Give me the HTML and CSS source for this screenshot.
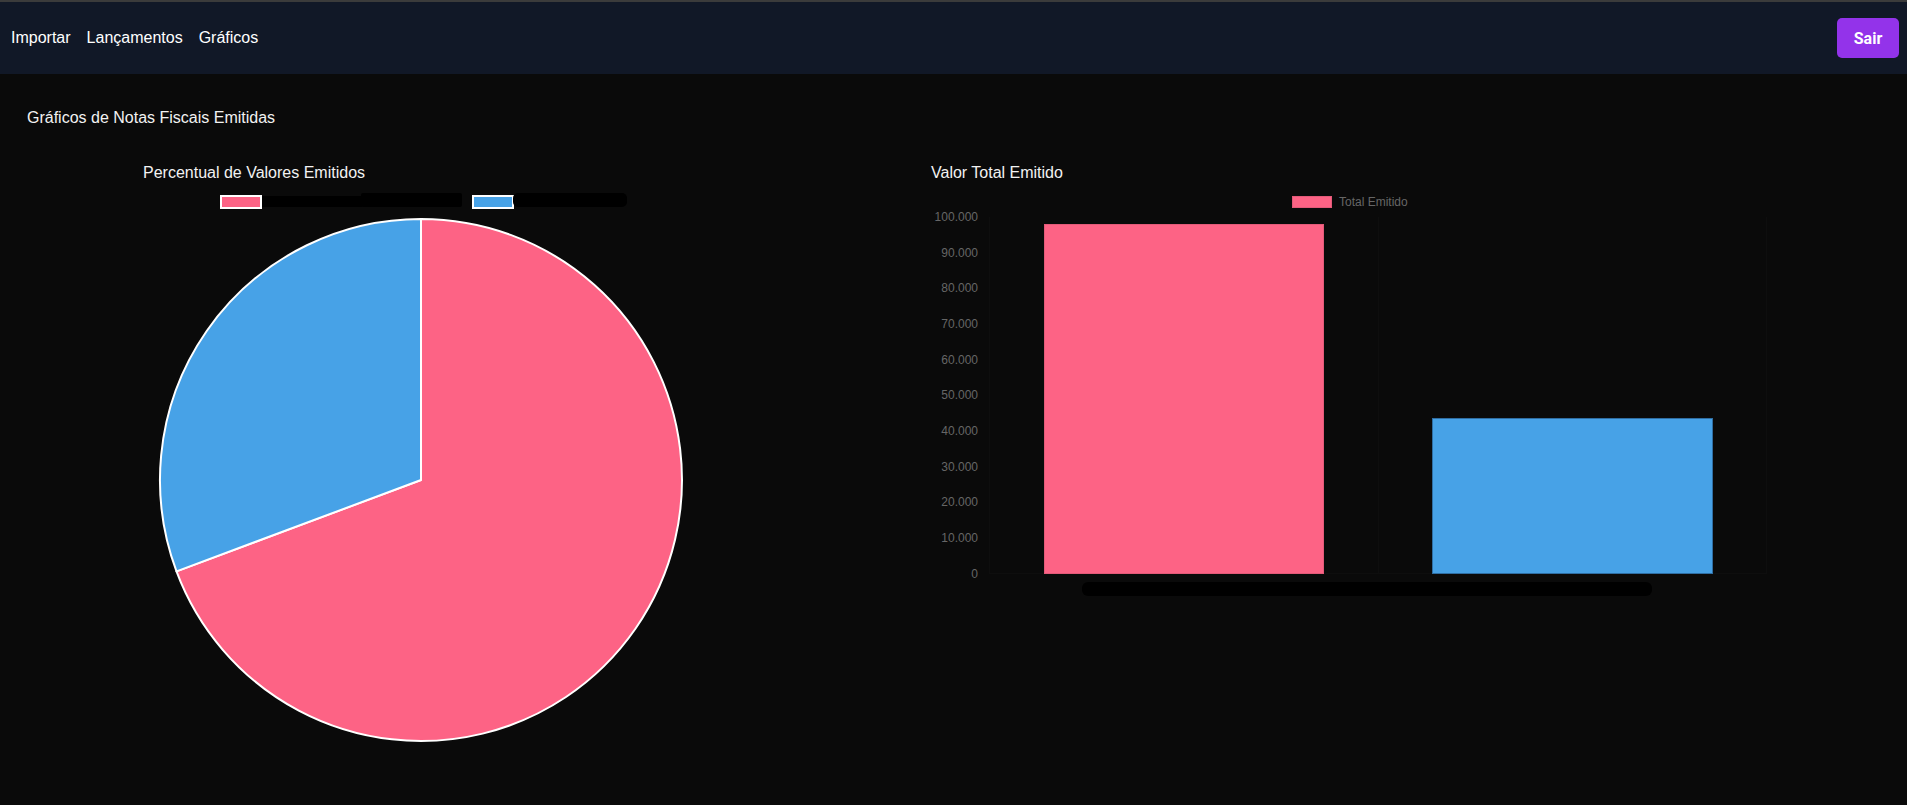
FILE: index.html
```html
<!DOCTYPE html>
<html lang="pt-BR">
<head>
<meta charset="utf-8">
<title>Gráficos</title>
<link rel="stylesheet" href="styles.css">
</head>
<body>
<header class="topbar">
  <nav class="nav">
    <a class="nav-link" href="#">Importar</a>
    <a class="nav-link" href="#">Lançamentos</a>
    <a class="nav-link" href="#">Gráficos</a>
  </nav>
  <button class="logout">Sair</button>
</header>
<main class="content">
  <h2 class="page-title">Gráficos de Notas Fiscais Emitidas</h2>
  <div class="charts">
    <section class="chart chart-pie">
      <h3 class="chart-title">Percentual de Valores Emitidos</h3>
      <svg class="chart-svg" width="556" height="562" viewBox="0 0 556 562">
        <rect x="78" y="11" width="40" height="12" fill="#fd6385" stroke="#ffffff" stroke-width="2"/>
        <rect x="119" y="11" width="100" height="11" fill="#000"/>
        <rect x="218" y="8" width="101" height="14" rx="2" fill="#000"/>
        <rect x="330" y="11" width="40" height="12" fill="#47a2e7" stroke="#ffffff" stroke-width="2"/>
        <rect x="370" y="8" width="114" height="14" rx="5" fill="#000"/>
        <path d="M278,295 L278,34 A261,261 0 1 1 33.5,386.4 Z" fill="#fd6385" stroke="#ffffff" stroke-width="2" stroke-linejoin="round"/>
        <path d="M278,295 L33.5,386.4 A261,261 0 0 1 278,34 Z" fill="#47a2e7" stroke="#ffffff" stroke-width="2" stroke-linejoin="round"/>
      </svg>
    </section>
    <section class="chart chart-bar">
      <h3 class="chart-title">Valor Total Emitido</h3>
      <svg class="chart-svg" width="837" height="420" viewBox="0 0 837 420">
        <rect x="361.5" y="11.5" width="39" height="11" fill="#fd6385" stroke="#e35a79" stroke-width="1"/>
        <text x="408" y="21" class="legend-text">Total Emitido</text>
        <g class="grid">
          <line x1="58.5" y1="32" x2="58.5" y2="389"/>
          <line x1="447.5" y1="32" x2="447.5" y2="389"/>
          <line x1="835.5" y1="32" x2="835.5" y2="389"/>
          <line x1="58" y1="388.5" x2="836" y2="388.5"/>
        </g>
        <g class="y-labels">
          <text x="47" y="36">100.000</text>
          <text x="47" y="71.7">90.000</text>
          <text x="47" y="107.3">80.000</text>
          <text x="47" y="143">70.000</text>
          <text x="47" y="178.7">60.000</text>
          <text x="47" y="214.3">50.000</text>
          <text x="47" y="250">40.000</text>
          <text x="47" y="285.7">30.000</text>
          <text x="47" y="321.3">20.000</text>
          <text x="47" y="357">10.000</text>
          <text x="47" y="392.7">0</text>
        </g>
        <rect x="113.5" y="39.5" width="279" height="349" fill="#fd6385" stroke="#e35a79" stroke-width="1"/>
        <rect x="501.5" y="233.5" width="280" height="155" fill="#47a2e7" stroke="#2f6ea3" stroke-width="1"/>
        <rect x="151" y="397" width="570" height="14" rx="6" fill="#000"/>
      </svg>
    </section>
  </div>
</main>
</body>
</html>
```

FILE: styles.css
```css
* {
  box-sizing: border-box;
}

html, body {
  margin: 0;
  padding: 0;
  background: #0a0a0a;
  min-height: 100%;
}

body {
  font-family: "Liberation Sans", Arial, sans-serif;
  color: #ffffff;
  min-height: 805px;
}

.topbar {
  height: 74px;
  border-top: 2px solid #3b3b3b;
  background: #111827;
  display: flex;
  align-items: center;
  justify-content: space-between;
  padding: 0 8px 0 11px;
}

.nav {
  display: flex;
  gap: 16px;
}

.nav-link {
  color: #ffffff;
  text-decoration: none;
  font-size: 16px;
  line-height: 18px;
}

.logout {
  height: 40px;
  width: 62px;
  padding: 0;
  border: none;
  border-radius: 5px;
  background: #9333ea;
  color: #ffffff;
  font-family: Roboto, "Liberation Sans", Arial, sans-serif;
  font-weight: 700;
  font-size: 16px;
  cursor: pointer;
}

.content {
  padding: 35px 27px 0;
}

.page-title {
  margin: 0;
  font-size: 16px;
  line-height: 18px;
  font-weight: 400;
  color: #f2f2f2;
}

.charts {
  display: flex;
  align-items: flex-start;
  gap: 232px;
  margin: 37px 0 0 116px;
}

.chart {
  display: flex;
  flex-direction: column;
}

.chart-pie {
  width: 556px;
}

.chart-bar {
  width: 837px;
}

.chart-title {
  margin: 0;
  font-size: 16px;
  line-height: 18px;
  font-weight: 400;
  color: #f2f2f2;
}

.chart-svg {
  display: block;
  margin-top: 3px;
  overflow: visible;
}

.legend-text {
  font-family: "Liberation Sans", Arial, sans-serif;
  font-size: 12px;
  fill: #666666;
}

.y-labels text {
  font-family: "Liberation Sans", Arial, sans-serif;
  font-size: 12px;
  fill: #666666;
  text-anchor: end;
}

.grid line {
  stroke: #0e0e0e;
  stroke-width: 1;
}
```
